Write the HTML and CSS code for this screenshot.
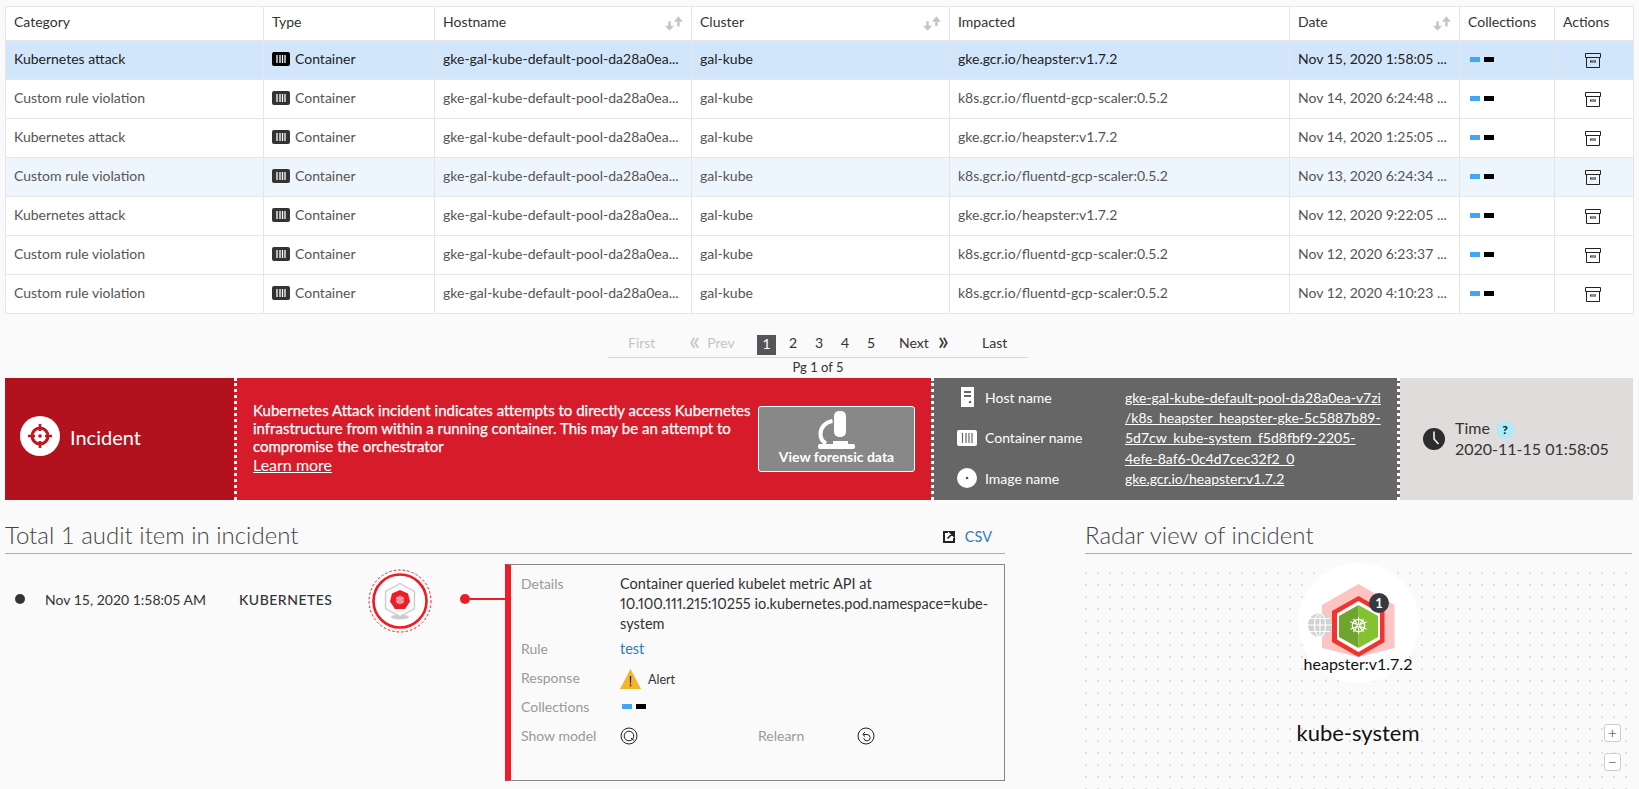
FILE: index.html
```html
<!DOCTYPE html>
<html lang="en">
<head>
<meta charset="utf-8">
<title>Incident</title>
<link rel="stylesheet" href="styles.css">
</head>
<body>
<svg class="defs" width="0" height="0" aria-hidden="true">
  <symbol id="i-container" viewBox="0 0 18 14">
    <rect width="18" height="14" rx="2" fill="currentColor"/>
    <path d="M5 3v8M8 3v8M10.500 3v8M13 3v8" stroke="#fff" stroke-width="1.300"/>
  </symbol>
  <symbol id="i-archive" viewBox="0 0 16 15">
    <path d="M.5.500h15v4H.5zM1.500 4.500v10h13v-10" fill="none" stroke="#222" stroke-width="1"/>
    <path d="M5 7.500h6v1H6v1H5z" fill="#222"/><path d="M10 8.500h1v1h-1zM6 9.500h4v.6H6z" fill="#222"/>
  </symbol>
  <symbol id="i-sort" viewBox="0 0 18 13">
    <path d="M5 4.500V10" fill="none" stroke="#c4c4c4" stroke-width="2.200"/>
    <path d="M1 8.500h8L5 13z" fill="#c4c4c4"/>
    <path d="M13 9V3.500" fill="none" stroke="#c4c4c4" stroke-width="2.200"/>
    <path d="M9 5 13 0l4 5z" fill="#c4c4c4"/>
  </symbol>
  <symbol id="i-wheel" viewBox="0 0 20 20">
    <g fill="none" stroke="currentColor">
      <circle cx="10" cy="10" r="6.500" stroke-width="1.400"/>
      <circle cx="10" cy="10" r="1.600" stroke-width="1.200"/>
      <path d="M10 1v7M10 12v7M1.500 6l6.800 3M11.700 11l6.800 3M18.500 6l-6.800 3M8.300 11l-6.800 3M4.500 17l4-5.500M15.500 17l-4-5.500M4.500 3l4 5.500M15.500 3l-4 5.500" stroke-width="1.200"/>
    </g>
  </symbol>
</svg>

<table class="grid">
  <colgroup>
    <col class="c1"><col class="c2"><col class="c3"><col class="c4"><col class="c5"><col class="c6"><col class="c7"><col class="c8">
  </colgroup>
  <thead>
    <tr>
      <th>Category</th>
      <th>Type</th>
      <th class="sortable">Hostname<svg class="sort"><use href="#i-sort"/></svg></th>
      <th class="sortable">Cluster<svg class="sort"><use href="#i-sort"/></svg></th>
      <th>Impacted</th>
      <th class="sortable">Date<svg class="sort"><use href="#i-sort"/></svg></th>
      <th>Collections</th>
      <th>Actions</th>
    </tr>
  </thead>
  <tbody>
    <tr class="selected">
      <td>Kubernetes attack</td>
      <td><span class="type"><svg class="ctr"><use href="#i-container"/></svg>Container</span></td>
      <td>gke-gal-kube-default-pool-da28a0ea...</td><td>gal-kube</td><td>gke.gcr.io/heapster:v1.7.2</td><td>Nov 15, 2020 1:58:05 ...</td>
      <td><span class="tags"><i class="tag blue"></i><i class="tag black"></i></span></td>
      <td class="act"><svg class="archive"><use href="#i-archive"/></svg></td>
    </tr>
    <tr>
      <td>Custom rule violation</td>
      <td><span class="type"><svg class="ctr"><use href="#i-container"/></svg>Container</span></td>
      <td>gke-gal-kube-default-pool-da28a0ea...</td><td>gal-kube</td><td>k8s.gcr.io/fluentd-gcp-scaler:0.5.2</td><td>Nov 14, 2020 6:24:48 ...</td>
      <td><span class="tags"><i class="tag blue"></i><i class="tag black"></i></span></td>
      <td class="act"><svg class="archive"><use href="#i-archive"/></svg></td>
    </tr>
    <tr>
      <td>Kubernetes attack</td>
      <td><span class="type"><svg class="ctr"><use href="#i-container"/></svg>Container</span></td>
      <td>gke-gal-kube-default-pool-da28a0ea...</td><td>gal-kube</td><td>gke.gcr.io/heapster:v1.7.2</td><td>Nov 14, 2020 1:25:05 ...</td>
      <td><span class="tags"><i class="tag blue"></i><i class="tag black"></i></span></td>
      <td class="act"><svg class="archive"><use href="#i-archive"/></svg></td>
    </tr>
    <tr class="hover">
      <td>Custom rule violation</td>
      <td><span class="type"><svg class="ctr"><use href="#i-container"/></svg>Container</span></td>
      <td>gke-gal-kube-default-pool-da28a0ea...</td><td>gal-kube</td><td>k8s.gcr.io/fluentd-gcp-scaler:0.5.2</td><td>Nov 13, 2020 6:24:34 ...</td>
      <td><span class="tags"><i class="tag blue"></i><i class="tag black"></i></span></td>
      <td class="act"><svg class="archive"><use href="#i-archive"/></svg></td>
    </tr>
    <tr>
      <td>Kubernetes attack</td>
      <td><span class="type"><svg class="ctr"><use href="#i-container"/></svg>Container</span></td>
      <td>gke-gal-kube-default-pool-da28a0ea...</td><td>gal-kube</td><td>gke.gcr.io/heapster:v1.7.2</td><td>Nov 12, 2020 9:22:05 ...</td>
      <td><span class="tags"><i class="tag blue"></i><i class="tag black"></i></span></td>
      <td class="act"><svg class="archive"><use href="#i-archive"/></svg></td>
    </tr>
    <tr>
      <td>Custom rule violation</td>
      <td><span class="type"><svg class="ctr"><use href="#i-container"/></svg>Container</span></td>
      <td>gke-gal-kube-default-pool-da28a0ea...</td><td>gal-kube</td><td>k8s.gcr.io/fluentd-gcp-scaler:0.5.2</td><td>Nov 12, 2020 6:23:37 ...</td>
      <td><span class="tags"><i class="tag blue"></i><i class="tag black"></i></span></td>
      <td class="act"><svg class="archive"><use href="#i-archive"/></svg></td>
    </tr>
    <tr>
      <td>Custom rule violation</td>
      <td><span class="type"><svg class="ctr"><use href="#i-container"/></svg>Container</span></td>
      <td>gke-gal-kube-default-pool-da28a0ea...</td><td>gal-kube</td><td>k8s.gcr.io/fluentd-gcp-scaler:0.5.2</td><td>Nov 12, 2020 4:10:23 ...</td>
      <td><span class="tags"><i class="tag blue"></i><i class="tag black"></i></span></td>
      <td class="act"><svg class="archive"><use href="#i-archive"/></svg></td>
    </tr>
  </tbody>
</table>

<nav class="pager">
  <div class="pager-bar">
    <span class="pg off pg-first">First</span>
    <span class="pg off pg-prev"><span class="chev">«</span>Prev</span>
    <span class="pg pg-current">1</span>
    <span class="pg pg-num">2</span>
    <span class="pg pg-num">3</span>
    <span class="pg pg-num">4</span>
    <span class="pg pg-num">5</span>
    <span class="pg pg-next">Next<span class="chev">»</span></span>
    <span class="pg pg-last">Last</span>
  </div>
  <div class="pager-info">Pg 1 of 5</div>
</nav>

<section class="banner">
  <div class="b-head">
    <span class="b-badge">
      <svg width="26" height="26" viewBox="0 0 26 26" fill="none" stroke="#c1141f">
        <circle cx="13" cy="13" r="8" stroke-width="3"/>
        <path d="M13 1v7M13 18v7M1 13h7M18 13h7" stroke-width="2.600"/>
        <circle cx="13" cy="13" r="1.800" fill="#c1141f" stroke="none"/>
      </svg>
    </span>
    <span class="b-title">Incident</span>
  </div>
  <div class="b-desc">
    <div class="b-text">
      <p>Kubernetes Attack incident indicates attempts to directly access Kubernetes infrastructure from within a running container. This may be an attempt to compromise the orchestrator</p>
      <a class="b-learn" href="#">Learn more</a>
    </div>
    <button class="b-btn" type="button">
      <svg width="37" height="38" viewBox="0 0 37 38">
        <rect x="16" y="0" width="12" height="26" rx="5" fill="#fff"/>
        <path d="M14.500 10C7.500 11 2.500 16.500 2.500 23c0 4 2 7.500 5.500 9.500" fill="none" stroke="#fff" stroke-width="4"/>
        <rect x="15" y="30" width="15" height="3" fill="#fff"/>
        <rect x="0" y="33" width="37" height="5" rx="2" fill="#fff"/>
      </svg>
      <span>View forensic data</span>
    </button>
  </div>
  <div class="b-info">
    <div class="b-labels">
      <div class="b-label">
        <span class="b-slot"><svg width="13" height="20" viewBox="0 0 13 20">
          <path d="M0 0h13v20H0z" fill="#fff"/>
          <path d="M3 4h7v2H3zM3 8h7v2H3z" fill="#666"/><circle cx="9" cy="15" r="1.300" fill="#666"/>
        </svg></span>
        <span>Host name</span>
      </div>
      <div class="b-label">
        <span class="b-slot"><svg width="20" height="16" viewBox="0 0 20 16">
          <rect width="20" height="16" rx="2" fill="#fff"/>
          <path d="M5.500 3v10M9 3v10M12 3v10M15 3v10" stroke="#666" stroke-width="1.200"/>
        </svg></span>
        <span>Container name</span>
      </div>
      <div class="b-label">
        <span class="b-slot"><svg width="20" height="20" viewBox="0 0 20 20">
          <circle cx="10" cy="10" r="10" fill="#fff"/><circle cx="10" cy="10" r="1.300" fill="#555"/>
        </svg></span>
        <span>Image name</span>
      </div>
    </div>
    <div class="b-links">
      <a href="#">gke-gal-kube-default-pool-da28a0ea-v7zi<br>/k8s_heapster_heapster-gke-5c5887b89-<br>5d7cw_kube-system_f5d8fbf9-2205-<br>4efe-8af6-0c4d7cec32f2_0</a>
      <a href="#">gke.gcr.io/heapster:v1.7.2</a>
    </div>
  </div>
  <div class="b-time">
    <svg class="b-clock" width="22" height="22" viewBox="0 0 22 22">
      <circle cx="11" cy="11" r="11" fill="#2d2d2d"/>
      <path d="M11 3.500V11l4.500 5" fill="none" stroke="#fff" stroke-width="1.500"/>
    </svg>
    <div>
      <div class="b-time-l">Time <span class="q">?</span></div>
      <div>2020-11-15 01:58:05</div>
    </div>
  </div>
</section>

<div class="lower">
  <section class="audit">
    <header class="sec-head">
      <h2>Total 1 audit item in incident</h2>
      <a class="csv" href="#">
        <svg width="12" height="12" viewBox="0 0 12 12">
          <path d="M5 1H1v10h10V7" fill="none" stroke="#222" stroke-width="2"/>
          <path d="M4.500 7.500 10 2M6.500 .8h4.700v4.700z" fill="#222" stroke="#222" stroke-width="1.600"/>
        </svg>
        <span>CSV</span>
      </a>
    </header>
    <div class="entry">
      <div class="entry-line">
        <i class="e-dot"></i>
        <span class="e-date">Nov 15, 2020 1:58:05 AM</span>
        <span class="e-kind">KUBERNETES</span>
        <svg class="e-icon" width="66" height="66" viewBox="0 0 66 66">
          <circle cx="33" cy="33" r="31" fill="none" stroke="#ee1c27" stroke-width="1" stroke-dasharray="2.500 2"/>
          <circle cx="33" cy="33" r="26.500" fill="#fff" stroke="#ee1c27" stroke-width="2.600"/>
          <ellipse cx="33" cy="49" rx="9" ry="2.500" fill="#aaa" opacity=".6"/>
          <path d="M33 15.500 47.500 23.500v17L33 48.500 18.500 40.500v-17z" fill="#fafafa" stroke="#ccc" stroke-width="1.400"/>
          <path d="M33 22 41 25.500 43 33.500 38 41H28L23 33.500 25 25.500z" fill="#ee1c27"/>
          <svg x="28" y="27" width="10" height="10" color="#fff"><use href="#i-wheel"/></svg>
        </svg>
        <span class="e-link"><i class="e-link-dot"></i><i class="e-link-bar"></i></span>
      </div>
      <div class="card">
        <div class="c-label c-top">Details</div>
        <div class="c-val c-details">Container queried kubelet metric API at<br>10.100.111.215:10255 io.kubernetes.pod.namespace=kube-<br>system</div>
        <div class="c-label">Rule</div>
        <div class="c-val"><a class="c-link" href="#">test</a></div>
        <div class="c-label">Response</div>
        <div class="c-val c-alert">
          <svg width="21" height="20" viewBox="0 0 21 20">
            <path d="M10.500 0 21 20H0z" fill="#f3b52b"/>
            <path d="M9.800 7h1.400l-.2 7.500h-1zM9.800 15.500h1.400v1.800H9.800z" fill="#222"/>
          </svg>
          <span>Alert</span>
        </div>
        <div class="c-label">Collections</div>
        <div class="c-val"><span class="tags"><i class="tag blue"></i><i class="tag black"></i></span></div>
        <div class="c-label">Show model</div>
        <div class="c-val c-split">
          <svg class="c-ico" width="18" height="18" viewBox="0 0 18 18" fill="none" stroke="#222">
            <circle cx="9" cy="9" r="8"/><circle cx="9" cy="9" r="4.800"/><path d="M11 11l3.500 3"/>
          </svg>
          <span class="c-label">Relearn</span>
          <svg class="c-ico" width="18" height="18" viewBox="0 0 18 18" fill="none" stroke="#222">
            <circle cx="9" cy="9" r="8"/><path d="M6.500 7.500H10a3.200 3.200 0 1 1-3.200 3.800"/><path d="M8 5 5.800 7.500 8 9.500"/>
          </svg>
        </div>
      </div>
    </div>
  </section>

  <section class="radar">
    <header class="sec-head">
      <h2>Radar view of incident</h2>
    </header>
    <div class="canvas">
      <div class="halo"></div>
      <svg class="node" width="140" height="100" viewBox="1290 570 140 100">
        <path d="M1358.500 584 1394.500 605V648L1358.500 657 1322 648V605z" fill="#fcc5c3"/>
        <circle cx="1320" cy="625" r="12" fill="#d2d2d2"/>
        <g fill="none" stroke="#fff" stroke-width="1.200">
          <ellipse cx="1320" cy="625" rx="5.500" ry="12"/>
          <path d="M1320 613v24M1308 625h24M1310 618.500h20M1310 631.500h20"/>
        </g>
        <path d="M1358.500 596 1384.500 611V642L1358.500 657 1332 642V611z" fill="#f0342f"/>
        <path d="M1358.500 601 1380 613.500V639.500L1358.500 652 1337 639.500V613.500z" fill="#fff"/>
        <path d="M1358.500 605 1378 616V637L1358.500 648z" fill="#84c22f"/>
        <path d="M1358.500 605 1339 616V637L1358.500 648z" fill="#6ea52e"/>
        <svg x="1349" y="616" width="19" height="19" color="#fff"><use href="#i-wheel"/></svg>
      </svg>
      <span class="badge">1</span>
      <div class="n-label">heapster:v1.7.2</div>
      <div class="ns-label">kube-system</div>
      <button class="zoom zoom-in" type="button">+</button>
      <button class="zoom zoom-out" type="button">−</button>
    </div>
  </section>
</div>
</body>
</html>
```

FILE: styles.css
```css
* { box-sizing: border-box; }
html, body { margin: 0; height: 789px; overflow: hidden; }
body {
  background: #fafafa;
  color: #333;
  font-family: Lato, "Open Sans", sans-serif;
  font-size: 14px;
  padding: 6px 6px 0 5px;
}
.defs { position: absolute; }

/* table */
.grid { width: 1628px; table-layout: fixed; border-collapse: collapse; background: #fff; }
.c1 { width: 258px; } .c2 { width: 171px; } .c3 { width: 257px; } .c4 { width: 258px; }
.c5 { width: 340px; } .c6 { width: 170px; } .c7 { width: 95px; } .c8 { width: 79px; }
.grid th, .grid td {
  border: 1px solid #e6e6e6;
  padding: 0 4px 4px 8px;
  text-align: left;
  white-space: nowrap;
  font-size: 14px;
}
.grid th { height: 34px; font-weight: 400; color: #333; position: relative; }
.grid td { height: 39px; color: #555; }
.grid .selected td { background: #d2e6fb; color: #222; }
.grid .hover td { background: #eef6fd; }
.sort { position: absolute; right: 7px; top: 9px; width: 20px; height: 15px; }
.type { display: flex; align-items: center; gap: 5px; position: relative; top: 1px; line-height: 14px; }
.ctr { width: 18px; height: 14px; color: #333; }
.selected .ctr { color: #000; }
.tags { display: flex; gap: 4px; margin-left: 2px; }
.grid .tags { position: relative; top: 1px; }
.tag { display: block; width: 10px; height: 5px; }
.tag.blue { background: #42a5f5; }
.tag.black { background: #000; }
.grid td.act { padding: 0 11px 0 8px; }
.archive { display: block; width: 16px; height: 15px; margin: 0 auto; }

/* pager */
.pager { margin-left: 603px; width: 420px; margin-top: 21px; }
.pager-bar {
  display: flex;
  align-items: flex-start;
  height: 23px;
  border-bottom: 1px solid #d8d8d8;
  color: #333;
  line-height: 16px;
}
.pg { display: block; }
.off { color: #c4c4c4; }
.chev { font-size: 26px; line-height: 0; vertical-align: -2px; }
.pg-first { margin-left: 20px; width: 61px; }
.pg-prev { width: 68px; }
.pg-prev .chev { margin-right: 7px; }
.pg-next .chev { margin-left: 9px; }
.pg-current {
  width: 19px; height: 20px; line-height: 17px; text-align: center;
  background: #555; color: #fff;
}
.pg-num { width: 26px; text-align: center; }
.pg-current + .pg-num { margin-left: 4px; }
.pg-next { margin-left: 15px; width: 83px; }
.pg-last { width: 30px; }
.pager-info { height: 20px; line-height: 18px; text-align: center; font-size: 13px; }

/* banner */
.banner { display: flex; height: 122px; width: 1628px; color: #fff; }
.b-head {
  width: 229px; background: #b2121d;
  display: flex; align-items: center; padding: 0 0 6px 15px; gap: 10px;
}
.b-badge {
  width: 40px; height: 40px; border-radius: 50%; background: #fff;
  display: flex; align-items: center; justify-content: center;
}
.b-title { font-size: 20px; margin-top: 2px; }
.b-desc {
  width: 697px; background: #d61c2a;
  border-left: 3px dotted #fff;
  display: flex; align-items: center;
  padding-left: 16px;
}
.b-text { width: 505px; font-size: 15px; line-height: 18px; padding-bottom: 3px; }
.b-text p { margin: 0; -webkit-text-stroke: .25px #fff; }
.b-learn { color: #fff; font-size: 16px; font-weight: 400; line-height: 20px; display: block; }
.b-btn {
  width: 157px; height: 66px;
  background: #888; border: 1px solid #fff; border-radius: 3px; color: #fff;
  font: 700 14px Lato, sans-serif;
  display: flex; flex-direction: column; align-items: center; justify-content: flex-start;
  padding: 4px 0 0;
}
.b-btn span { margin-top: -1px; }
.b-info {
  width: 469px; background: #666;
  border-left: 3px dotted #fff; border-right: 3px dotted #fff;
  display: flex;
  padding: 10px 0 0 23px;
}
.b-labels { width: 168px; display: flex; flex-direction: column; gap: 20.500px; margin-top: -1px; }
.b-label { display: flex; align-items: center; height: 20px; gap: 8px; }
.b-slot { width: 20px; display: flex; justify-content: center; }
.b-slot svg { display: block; }
.b-links { line-height: 20.200px; display: flex; flex-direction: column; font-size: 14px; }
.b-links a { color: #fff; }
.b-time {
  flex: 1; background: #e0dcdc; color: #333;
  display: flex; align-items: center; gap: 10px; padding: 0 0 3px 23px;
  font-size: 16px; line-height: 19px;
}
.b-clock { margin-top: 3px; }
.q {
  display: inline-block; width: 18px; height: 18px; line-height: 18px; border-radius: 50%;
  background: #aeeaf8; color: #123; text-align: center; font-size: 12px; font-weight: 900;
  margin-left: 2px; vertical-align: 0;
}

/* lower */
.lower { display: flex; margin-top: 21px; }
.audit { width: 1000px; }
.radar { width: 547px; margin-left: 80px; }
.sec-head {
  display: flex; justify-content: space-between; align-items: flex-end;
  height: 33px; border-bottom: 1px solid #a9b0b8;
}
.sec-head h2 { margin: 0; font-size: 24px; font-weight: 300; color: #444; line-height: 30px; padding-bottom: 3px; }
.csv { display: flex; align-items: center; gap: 10px; color: #337ab7; text-decoration: none; font-size: 14.500px; margin-right: 13px; padding-bottom: 8px; }

.entry { display: flex; margin-top: 10px; }
.entry-line { width: 500px; height: 70px; display: flex; align-items: center; }
.e-dot { width: 10px; height: 10px; border-radius: 50%; background: #333; margin-left: 10px; }
.e-date { margin-left: 20px; width: 194px; font-size: 14px; }
.e-kind { width: 128px; font-weight: 500; font-size: 14px; letter-spacing: .5px; color: #333; }
.e-icon { margin-top: 4px; flex: none; }
.e-link { display: flex; align-items: center; flex: 1; margin-left: 27px; }
.e-link-dot { width: 10px; height: 10px; border-radius: 50%; background: #ee1c27; }
.e-link-bar { flex: 1; height: 2px; background: #ee1c27; }

.card {
  width: 500px; height: 217px;
  border: 1px solid #888; border-left: 6px solid #ee1c27;
  padding: 9px 0 0 10px;
  display: grid;
  grid-template-columns: 99px 1fr;
  grid-auto-rows: 29px;
  grid-template-rows: 60px;
  align-items: center;
  font-size: 14.500px;
}
.c-label { color: #999; font-size: 14px; }
.c-top { align-self: start; line-height: 20px; }
.c-val { color: #333; }
.c-details { line-height: 20px; align-self: start; white-space: nowrap; font-variant-numeric: proportional-nums; }
.c-link { color: #337ab7; text-decoration: none; }
.c-alert { display: flex; align-items: center; gap: 7px; font-size: 12.500px; margin-top: 3px; }
.c-split { display: flex; align-items: center; }
.c-split .c-label { margin-left: 120px; width: 99px; }
.c-ico { flex: none; }

/* radar */
.canvas {
  position: relative;
  height: 223px;
  margin-top: 12px;
  background-image: radial-gradient(circle at center, #e0e0e0 0, #e0e0e0 .9px, transparent 1.100px);
  background-size: 12px 12px;
  background-position: -5px 1px;
}
.halo { position: absolute; left: 213px; top: -3px; width: 121px; height: 120px; border-radius: 50%; background: #fff; }
.node { position: absolute; left: 205px; top: 4px; }
.badge {
  position: absolute; left: 284px; top: 27px;
  width: 20px; height: 20px; line-height: 20px; border-radius: 50%;
  background: #343a40; color: #fff; text-align: center; font-size: 13px; font-weight: 700;
}
.n-label { position: absolute; left: 173px; width: 200px; top: 88px; line-height: 20px; text-align: center; font-size: 16px; color: #111; }
.ns-label { position: absolute; left: 173px; width: 200px; top: 152px; line-height: 30px; text-align: center; font-size: 22px; color: #111; }
.zoom {
  position: absolute; left: 519px; width: 17px; height: 18px; padding: 0;
  background: #fff; border: 1px solid #ccc; border-radius: 3px; color: #333;
  font: 300 16px/16px Lato, sans-serif;
}
.zoom-in { top: 158px; }
.zoom-out { top: 187px; }
```
